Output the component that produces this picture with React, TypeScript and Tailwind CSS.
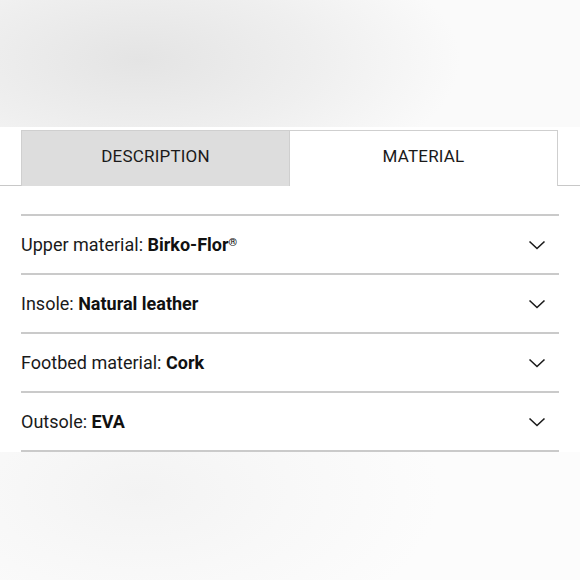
const ROWS = [
  { label: "Upper material:", value: "Birko-Flor", reg: true },
  { label: "Insole:", value: "Natural leather" },
  { label: "Footbed material:", value: "Cork" },
  { label: "Outsole:", value: "EVA" },
];

function Chevron() {
  return (
    <svg width="18" height="10" viewBox="0 0 18 10" fill="none" className="mr-[13px]">
      <polyline points="1.5,1.5 9,8.5 16.5,1.5" stroke="#1a1a1a" strokeWidth="1.6" />
    </svg>
  );
}

export default function App() {
  return (
    <div
      className="flex h-[580px] w-[580px] flex-col overflow-hidden bg-white text-[#1a1a1a]"
      style={{ fontFamily: "Roboto, 'Liberation Sans', sans-serif" }}
    >
      {/* blurred image band */}
      <div className="h-[127px] shrink-0 bg-[radial-gradient(ellipse_320px_140px_at_140px_60px,#e4e4e4_0%,#efefef_55%,#fafafa_100%)]" />

      {/* tabs */}
      <div className="flex h-[59px] shrink-0 pt-[3px]">
        <div className="w-[21px] border-b border-[#c8c8c8]" />
        <div className="flex w-[269px] items-center justify-center border border-b-0 border-[#cfcfcf] bg-[#dddddd] pb-[3px] text-[17px] tracking-[0.2px]">
          DESCRIPTION
        </div>
        <div className="flex w-[268px] items-center justify-center border border-l-0 border-b-0 border-[#cfcfcf] bg-white pb-[3px] text-[17px] tracking-[0.2px]">
          MATERIAL
        </div>
        <div className="flex-1 border-b border-[#c8c8c8]" />
      </div>

      {/* material rows */}
      <div className="shrink-0 px-[21px] pt-[28px]">
        <div className="border-t-2 border-[#cacaca]">
          {ROWS.map((r) => (
            <div
              key={r.label}
              className="flex h-[59px] items-center justify-between border-b-2 border-[#cacaca] text-[18px]"
            >
              <span>
                {r.label}{" "}
                <span className="font-bold text-[#111]">
                  {r.value}
                  {r.reg && <sup className="text-[11px] text-[#111]">®</sup>}
                </span>
              </span>
              <Chevron />
            </div>
          ))}
        </div>
      </div>

      {/* faint lower band */}
      <div className="flex-1 bg-[radial-gradient(ellipse_300px_160px_at_140px_40px,#f3f3f3_0%,#f8f8f8_50%,#fcfcfc_100%)]" />
    </div>
  );
}
